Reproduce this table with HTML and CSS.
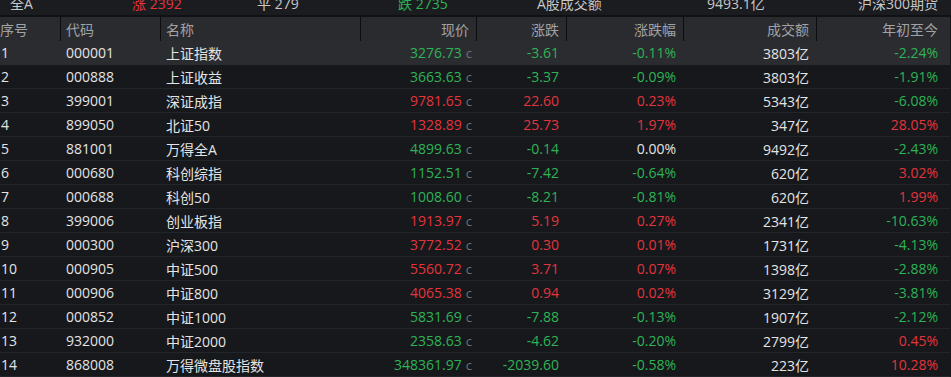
FILE: index.html
```html
<!DOCTYPE html>
<html lang="zh-CN">
<head>
    <meta charset="UTF-8" />
    <title>指数行情</title>
    <link rel="stylesheet" href="styles.css">
</head>
<body>
    <div class="summary">
        <span>全A</span>
        <span class="up">涨 2392</span>
        <span>平 279</span>
        <span class="down">跌 2735</span>
        <span>A股成交额</span>
        <span>9493.1亿</span>
        <span>沪深300期货</span>
    </div>
    <table class="quotes">
        <colgroup>
            <col style="width:65px">
            <col style="width:100px">
            <col style="width:200px">
            <col style="width:116px">
            <col style="width:90px">
            <col style="width:117px">
            <col style="width:133px">
            <col style="width:134px">
        </colgroup>
        <thead>
            <tr>
                <th>序号</th>
                <th>代码</th>
                <th>名称</th>
                <th class="num">现价</th>
                <th class="num">涨跌</th>
                <th class="num">涨跌幅</th>
                <th class="num">成交额</th>
                <th class="num">年初至今</th>
            </tr>
        </thead>
        <tbody>
            <tr class="active">
                <td>1</td><td>000001</td><td>上证指数</td>
                <td class="num price down">3276.73<i>c</i></td><td class="num down">-3.61</td><td class="num down">-0.11%</td><td class="num">3803亿</td><td class="num down">-2.24%</td>
            </tr>
            <tr>
                <td>2</td><td>000888</td><td>上证收益</td>
                <td class="num price down">3663.63<i>c</i></td><td class="num down">-3.37</td><td class="num down">-0.09%</td><td class="num">3803亿</td><td class="num down">-1.91%</td>
            </tr>
            <tr>
                <td>3</td><td>399001</td><td>深证成指</td>
                <td class="num price up">9781.65<i>c</i></td><td class="num up">22.60</td><td class="num up">0.23%</td><td class="num">5343亿</td><td class="num down">-6.08%</td>
            </tr>
            <tr>
                <td>4</td><td>899050</td><td>北证50</td>
                <td class="num price up">1328.89<i>c</i></td><td class="num up">25.73</td><td class="num up">1.97%</td><td class="num">347亿</td><td class="num up">28.05%</td>
            </tr>
            <tr>
                <td>5</td><td>881001</td><td>万得全A</td>
                <td class="num price down">4899.63<i>c</i></td><td class="num down">-0.14</td><td class="num">0.00%</td><td class="num">9492亿</td><td class="num down">-2.43%</td>
            </tr>
            <tr>
                <td>6</td><td>000680</td><td>科创综指</td>
                <td class="num price down">1152.51<i>c</i></td><td class="num down">-7.42</td><td class="num down">-0.64%</td><td class="num">620亿</td><td class="num up">3.02%</td>
            </tr>
            <tr>
                <td>7</td><td>000688</td><td>科创50</td>
                <td class="num price down">1008.60<i>c</i></td><td class="num down">-8.21</td><td class="num down">-0.81%</td><td class="num">620亿</td><td class="num up">1.99%</td>
            </tr>
            <tr>
                <td>8</td><td>399006</td><td>创业板指</td>
                <td class="num price up">1913.97<i>c</i></td><td class="num up">5.19</td><td class="num up">0.27%</td><td class="num">2341亿</td><td class="num down">-10.63%</td>
            </tr>
            <tr>
                <td>9</td><td>000300</td><td>沪深300</td>
                <td class="num price up">3772.52<i>c</i></td><td class="num up">0.30</td><td class="num up">0.01%</td><td class="num">1731亿</td><td class="num down">-4.13%</td>
            </tr>
            <tr>
                <td>10</td><td>000905</td><td>中证500</td>
                <td class="num price up">5560.72<i>c</i></td><td class="num up">3.71</td><td class="num up">0.07%</td><td class="num">1398亿</td><td class="num down">-2.88%</td>
            </tr>
            <tr>
                <td>11</td><td>000906</td><td>中证800</td>
                <td class="num price up">4065.38<i>c</i></td><td class="num up">0.94</td><td class="num up">0.02%</td><td class="num">3129亿</td><td class="num down">-3.81%</td>
            </tr>
            <tr>
                <td>12</td><td>000852</td><td>中证1000</td>
                <td class="num price down">5831.69<i>c</i></td><td class="num down">-7.88</td><td class="num down">-0.13%</td><td class="num">1907亿</td><td class="num down">-2.12%</td>
            </tr>
            <tr>
                <td>13</td><td>932000</td><td>中证2000</td>
                <td class="num price down">2358.63<i>c</i></td><td class="num down">-4.62</td><td class="num down">-0.20%</td><td class="num">2799亿</td><td class="num up">0.45%</td>
            </tr>
            <tr>
                <td>14</td><td>868008</td><td>万得微盘股指数</td>
                <td class="num price down">348361.97<i>c</i></td><td class="num down">-2039.60</td><td class="num down">-0.58%</td><td class="num">223亿</td><td class="num up">10.28%</td>
            </tr>
        </tbody>
    </table>
</body>
</html>
```

FILE: styles.css
```css
* {
    margin: 0;
    padding: 0;
    box-sizing: border-box;
}

body {
    font-family: 'Open Sans', 'Noto Sans CJK SC', sans-serif;
    font-size: 14px;
    background: #16181c;
    color: #e4e4e4;
    overflow: hidden;
}

.summary {
    display: grid;
    grid-template-columns: 122px 125px 141px 139px 170px 151px 1fr;
    height: 26px;
    margin-top: -9px;
    padding-left: 10px;
    align-items: center;
    background: #1b1c20;
    color: #c8c8c8;
    border-bottom: 2px solid #101114;
}

.up {
    color: #e2353c;
}

.down {
    color: #2fb356;
}

.quotes {
    table-layout: fixed;
    border-collapse: separate;
    border-spacing: 0;
    width: 955px;
    margin-left: -5px;
}

.quotes th {
    height: 24px;
    font-weight: normal;
    color: #a2a2a4;
    background: #2a2b2f;
    text-align: left;
    padding: 0 7px 0 5px;
    border-left: 1px solid #0c0d0f;
    white-space: nowrap;
}

.quotes th:first-child {
    border-left: none;
}

.quotes td {
    height: 24px;
    padding: 0 7px 0 6px;
    border-bottom: 1px solid #22252a;
    white-space: nowrap;
}

.quotes tr.active td {
    background: #2b2c30;
    border-bottom-color: #2b2c30;
}

.quotes .num {
    text-align: right;
}

.quotes th:last-child,
.quotes td:last-child {
    padding-right: 12px;
}

.quotes td.price {
    padding-right: 4px;
}

.quotes td.price i {
    font-style: normal;
    color: #6f7073;
    font-size: 13px;
    margin-left: 4px;
}
```
